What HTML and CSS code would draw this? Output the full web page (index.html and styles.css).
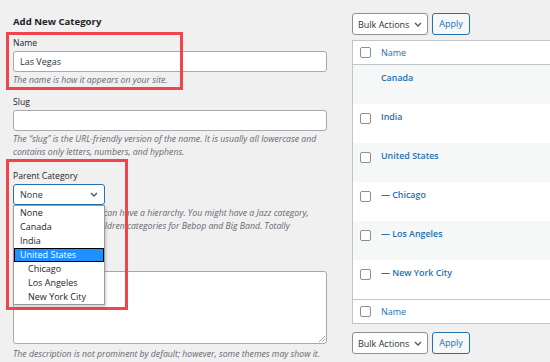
FILE: index.html
```html
<!DOCTYPE html>
<html lang="en">
<head>
  <meta charset="UTF-8">
  <title>Categories</title>
  <link rel="stylesheet" href="styles.css">
</head>
<body>
  <div class="page">
    <div class="col-left">
      <h2 class="form-title">Add New Category</h2>

      <div class="field field-name">
        <div class="field-label">Name</div>
        <div class="text-input">Las Vegas</div>
        <p class="help">The name is how it appears on your site.</p>
      </div>

      <div class="field">
        <div class="field-label">Slug</div>
        <div class="text-input"></div>
        <p class="help">The “slug” is the URL-friendly version of the name. It is usually all lowercase and<br>contains only letters, numbers, and hyphens.</p>
      </div>

      <div class="field field-parent">
        <div class="field-label">Parent Category</div>
        <div class="select-wrap">
          <div class="select select-open">
            <span>None</span>
            <svg class="chevron" width="8" height="5" viewBox="0 0 8 5"><polyline points="1,1 4,4 7,1"/></svg>
          </div>
          <ul class="dropdown">
            <li>None</li>
            <li>Canada</li>
            <li>India</li>
            <li class="selected">United States</li>
            <li class="child">Chicago</li>
            <li class="child">Los Angeles</li>
            <li class="child">New York City</li>
          </ul>
        </div>
        <p class="help">Categories, unlike tags, can have a hierarchy. You might have a Jazz category,<br>and under that have children categories for Bebop and Big Band. Totally<br>optional.</p>
      </div>

      <div class="field field-desc">
        <div class="field-label">Description</div>
        <div class="textarea">
          <svg class="grip" width="6" height="6" viewBox="0 0 6 6"><path d="M0 6 L6 0 M3 6 L6 3"/></svg>
        </div>
        <p class="help help-desc">The description is not prominent by default; however, some themes may show it.</p>
      </div>
    </div>

    <div class="col-right">
      <div class="tablenav">
        <div class="select bulk-select">
          <span>Bulk Actions</span>
          <svg class="chevron" width="8" height="5" viewBox="0 0 8 5"><polyline points="1,1 4,4 7,1"/></svg>
        </div>
        <div class="apply-btn">Apply</div>
      </div>

      <div class="cat-table">
        <div class="t-head">
          <div class="cb-cell"><span class="checkbox"></span></div>
          <span class="col-name">Name</span>
        </div>
        <div class="t-row alt">
          <div class="cb-cell"></div>
          <span class="row-title">Canada</span>
        </div>
        <div class="t-row">
          <div class="cb-cell"><span class="checkbox"></span></div>
          <span class="row-title">India</span>
        </div>
        <div class="t-row alt">
          <div class="cb-cell"><span class="checkbox"></span></div>
          <span class="row-title">United States</span>
        </div>
        <div class="t-row">
          <div class="cb-cell"><span class="checkbox"></span></div>
          <span class="row-title">— Chicago</span>
        </div>
        <div class="t-row alt">
          <div class="cb-cell"><span class="checkbox"></span></div>
          <span class="row-title">— Los Angeles</span>
        </div>
        <div class="t-row">
          <div class="cb-cell"><span class="checkbox"></span></div>
          <span class="row-title">— New York City</span>
        </div>
        <div class="t-foot">
          <div class="cb-cell"><span class="checkbox"></span></div>
          <span class="col-name">Name</span>
        </div>
      </div>

      <div class="tablenav tablenav-bottom">
        <div class="select bulk-select">
          <span>Bulk Actions</span>
          <svg class="chevron" width="8" height="5" viewBox="0 0 8 5"><polyline points="1,1 4,4 7,1"/></svg>
        </div>
        <div class="apply-btn">Apply</div>
      </div>
    </div>

    <!-- annotation boxes -->
    <div class="mark mark-name"></div>
    <div class="mark mark-parent"></div>
  </div>
</body>
</html>
```

FILE: styles.css
```css
body {
  margin: 0;
  background: #f0f0f1;
  font-family: "Open Sans", "Noto Sans", sans-serif;
  color: #1d2327;
  overflow: hidden;
}

.page {
  position: relative;
  display: flex;
  gap: 25px;
  padding: 12px 0 0 13px;
  height: 362px;
  box-sizing: border-box;
}

.col-left {
  width: 314px;
  flex-shrink: 0;
}

.form-title {
  margin: 0;
  font-size: 9.6px;
  font-weight: 700;
  line-height: 19px;
  color: #1d2327;
}

.field {
  margin-top: 9.5px;
}

.field-name {
  margin-top: 6px;
}

.field-parent {
  margin-top: 12px;
}

.field-desc {
  margin-top: 12px;
}

.field-label {
  font-size: 8.6px;
  line-height: 12px;
  margin-bottom: 2px;
}

.text-input {
  box-sizing: border-box;
  height: 21px;
  border: 1px solid #a7aaad;
  border-radius: 3px;
  background: #fff;
  padding: 0 6px;
  font-size: 9px;
  line-height: 19px;
  color: #2c3338;
}

.help {
  margin: 2px 0 0;
  font-size: 8.7px;
  font-style: italic;
  line-height: 12.5px;
  white-space: nowrap;
  color: #646970;
}

.help-desc {
  margin-top: 4px;
}

/* parent select + open list */
.select-wrap {
  position: relative;
  width: 92px;
}

.select {
  box-sizing: border-box;
  height: 21px;
  display: flex;
  align-items: center;
  justify-content: space-between;
  padding: 0 6px;
  background: #fff;
  border: 1px solid #8c8f94;
  border-radius: 3px;
  font-size: 9px;
  color: #2c3338;
}

.select-open {
  border-color: #2271b1;
}

.chevron polyline {
  fill: none;
  stroke: #50575e;
  stroke-width: 1.3;
}

.dropdown {
  position: absolute;
  top: 21px;
  left: 0;
  width: 92px;
  box-sizing: border-box;
  margin: 0;
  padding: 0;
  list-style: none;
  background: #fff;
  border: 1px solid #9a9a9a;
  box-shadow: 1px 2px 3px rgba(0, 0, 0, 0.2);
  z-index: 2;
}

.dropdown li {
  height: 14px;
  line-height: 14px;
  padding-left: 6px;
  font-size: 9px;
  color: #1d2327;
}

.dropdown li.child {
  padding-left: 14px;
}

.dropdown li.selected {
  background: #1e90ff;
  color: #fff;
  outline: 1px solid #000;
  outline-offset: -1px;
}

.textarea {
  position: relative;
  box-sizing: border-box;
  height: 73px;
  background: #fff;
  border: 1px solid #a7aaad;
  border-radius: 3px;
}

.grip {
  position: absolute;
  right: 1px;
  bottom: 1px;
}

.grip path {
  stroke: #8c8f94;
  stroke-width: 0.8;
}

/* right side: list table */
.col-right {
  width: 230px;
  flex-shrink: 0;
  padding-top: 1px;
}

.tablenav {
  display: flex;
  gap: 4px;
}

.tablenav-bottom {
  margin-top: 8px;
}

.bulk-select {
  width: 76px;
  height: 22px;
  padding: 0 5px;
  font-size: 9px;
}

.apply-btn {
  box-sizing: border-box;
  width: 38px;
  height: 22px;
  border: 1px solid #2271b1;
  border-radius: 3px;
  background: #f6f7f7;
  color: #2271b1;
  font-size: 9px;
  line-height: 20px;
  text-align: center;
}

.cat-table {
  margin-top: 5px;
  background: #fff;
  border: 1px solid #c3c4c7;
}

.t-head,
.t-foot {
  display: flex;
  align-items: center;
  height: 23px;
}

.t-head {
  border-bottom: 1px solid #c3c4c7;
}

.t-foot {
  border-top: 1px solid #c3c4c7;
}

.t-row {
  display: flex;
  align-items: flex-start;
  height: 39px;
  box-sizing: border-box;
  padding-top: 7px;
}

.t-row.alt {
  background: #f6f7f7;
}

.cb-cell {
  width: 28px;
  flex-shrink: 0;
  padding-left: 7px;
  box-sizing: border-box;
  height: 12px;
  display: flex;
  align-items: center;
}

.t-row .cb-cell {
  height: 14px;
}

.checkbox {
  display: block;
  width: 11px;
  height: 11px;
  box-sizing: border-box;
  border: 1px solid #8c8f94;
  border-radius: 2px;
  background: #fff;
}

.col-name {
  font-size: 9px;
  line-height: 12px;
  color: #2271b1;
}

.row-title {
  font-size: 8.9px;
  font-weight: 600;
  line-height: 12px;
  color: #2271b1;
}

/* red annotation frames */
.mark {
  position: absolute;
  border: 3px solid #f0454c;
  box-sizing: border-box;
}

.mark-name {
  left: 6px;
  top: 32px;
  width: 177px;
  height: 58px;
}

.mark-parent {
  left: 6px;
  top: 159px;
  width: 122px;
  height: 151px;
}
```
